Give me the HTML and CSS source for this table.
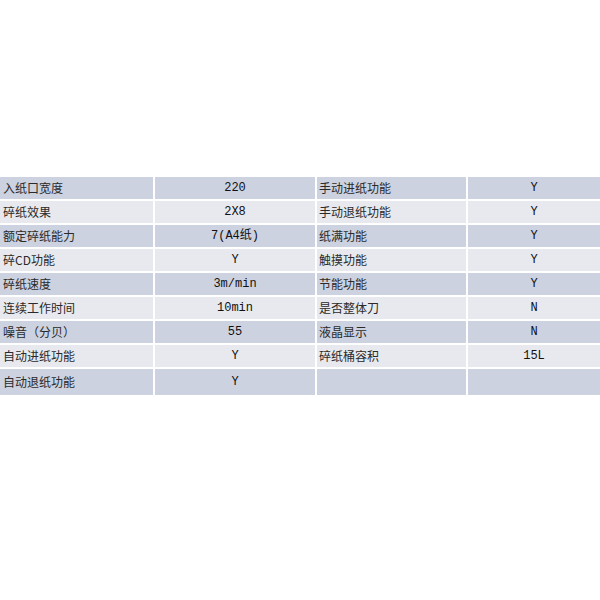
FILE: index.html
```html
<!DOCTYPE html>
<html lang="zh">
<head>
<meta charset="utf-8">
<link rel="stylesheet" href="styles.css">
</head>
<body>
<div class="page">
  <div class="spec">
    <div class="c k b">入纸口宽度</div><div class="c v b">220</div><div class="c k2 b">手动进纸功能</div><div class="c v b">Y</div>
    <div class="c k l">碎纸效果</div><div class="c v l">2X8</div><div class="c k2 l">手动退纸功能</div><div class="c v l">Y</div>
    <div class="c k b">额定碎纸能力</div><div class="c v b">7(A4纸)</div><div class="c k2 b">纸满功能</div><div class="c v b">Y</div>
    <div class="c k l">碎CD功能</div><div class="c v l">Y</div><div class="c k2 l">触摸功能</div><div class="c v l">Y</div>
    <div class="c k b">碎纸速度</div><div class="c v b">3m/min</div><div class="c k2 b">节能功能</div><div class="c v b">Y</div>
    <div class="c k l">连续工作时间</div><div class="c v l">10min</div><div class="c k2 l">是否整体刀</div><div class="c v l">N</div>
    <div class="c k b">噪音（分贝）</div><div class="c v b">55</div><div class="c k2 b">液晶显示</div><div class="c v b">N</div>
    <div class="c k l">自动进纸功能</div><div class="c v l">Y</div><div class="c k2 l">碎纸桶容积</div><div class="c v l">15L</div>
    <div class="c k b">自动退纸功能</div><div class="c v b">Y</div><div class="c k2 b"></div><div class="c v b"></div>
  </div>
</div>
</body>
</html>
```
FILE: styles.css
```css
html, body {
  margin: 0;
  padding: 0;
  background: #ffffff;
}
.page {
  padding-top: 177px;
}
.spec {
  display: grid;
  grid-template-columns: 153px 160px 149px 1fr;
  grid-template-rows: repeat(8, 22px) 26px;
  gap: 2px;
  background: #ffffff;
  font-family: "Noto Sans CJK SC", "Noto Sans", sans-serif;
  font-size: 12px;
  color: #2a2a2a;
}
.c {
  display: flex;
  align-items: center;
  line-height: 1;
  white-space: nowrap;
}
.b {
  background: #cdd2e1;
}
.l {
  background: #e8e9ee;
}
.k {
  padding-left: 3px;
}
.k2 {
  padding-left: 2px;
}
.v {
  justify-content: center;
  font-family: "Liberation Mono", "Noto Sans CJK SC", monospace;
  font-size: 12px;
  color: #111111;
}
```
